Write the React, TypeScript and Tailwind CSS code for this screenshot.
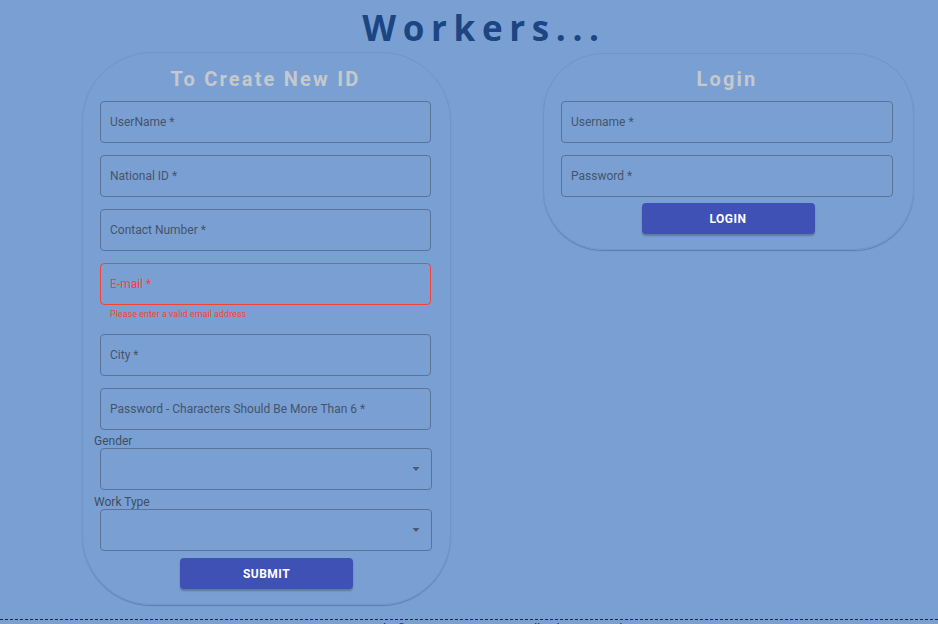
import React from "react";

const font = { fontFamily: "Roboto, 'Liberation Sans', sans-serif" };

function Field({ label, error }: { label: string; error?: boolean }) {
  return (
    <div
      className={
        "flex h-[42px] w-full items-center rounded-[4px] border px-[9px] " +
        (error ? "border-[#f44336]" : "border-[#5b7299]")
      }
    >
      <span className={"text-[12px] " + (error ? "text-[#f44336]" : "text-[#45546d]")}>
        {label}
      </span>
    </div>
  );
}

function Select() {
  return (
    <div className="flex h-[42px] w-[332px] items-center justify-end rounded-[4px] border border-[#5b7299] pr-[10px]">
      <svg width="10" height="6" viewBox="0 0 10 6">
        <path d="M1.5 1 L8.5 1 L5 5 Z" fill="#4a5972" />
      </svg>
    </div>
  );
}

export default function App() {
  return (
    <div className="min-h-[624px] w-full bg-[#7aa0d3] overflow-hidden" style={font}>
      <div className="flex h-[52px] items-center justify-center">
        <h1
          className="text-[35px] font-bold tracking-[0.19em] text-[#1b4583] leading-none mt-[2px] ml-[30px]"
          style={{ fontFamily: "'Open Sans', 'DejaVu Sans', sans-serif" }}
        >
          Workers...
        </h1>
      </div>
      <div className="flex items-start gap-[92px] pl-[82px]">
        <div className="flex w-[369px] flex-col rounded-[70px] border border-[#7095c7] pb-[15px] pl-[17px] pr-[19px] pt-[14px] shadow-[0_1px_1px_rgba(40,60,100,0.35)]">
          <h2 className="mb-[10px] text-center text-[20px] font-bold leading-[24px] tracking-[0.11em] text-[#c5c9ce]">
            To Create New ID
          </h2>
          <div className="flex flex-col gap-[12px]">
            <Field label="UserName *" />
            <Field label="National ID *" />
            <Field label="Contact Number *" />
            <Field label="E-mail *" error />
          </div>
          <div className="mt-[3px] mb-[14px] pl-[10px] text-[9px] leading-[12px] text-[#f44336]">
            Please enter a valid email address
          </div>
          <div className="flex flex-col gap-[12px]">
            <Field label="City *" />
            <Field label="Password - Characters Should Be More Than 6 *" />
          </div>
          <div className="mt-[4px] -ml-[6px] text-[12px] leading-[14px] text-[#3f4d63]">Gender</div>
          <Select />
          <div className="mt-[5px] -ml-[6px] text-[12px] leading-[14px] text-[#3f4d63]">Work Type</div>
          <Select />
          <div className="mt-[7px] flex justify-center pl-[2px]">
            <button className="h-[31px] w-[173px] rounded-[4px] bg-[#3f51b5] text-[12px] font-bold tracking-[0.04em] text-white shadow-[0_2px_2px_rgba(0,0,0,0.25)]">
              SUBMIT
            </button>
          </div>
        </div>
        <div className="mt-[1px] flex w-[371px] flex-col rounded-[60px] border border-[#7095c7] pb-[15px] pl-[17px] pr-[20px] pt-[13px] shadow-[0_1px_1px_rgba(40,60,100,0.35)]">
          <h2 className="mb-[10px] text-center text-[20px] font-bold leading-[24px] tracking-[0.11em] text-[#c5c9ce]">
            Login
          </h2>
          <div className="flex flex-col gap-[12px]">
            <Field label="Username *" />
            <Field label="Password *" />
          </div>
          <div className="mt-[6px] flex justify-center pl-[2px]">
            <button className="h-[31px] w-[173px] rounded-[4px] bg-[#3f51b5] text-[12px] font-bold tracking-[0.04em] text-white shadow-[0_2px_2px_rgba(0,0,0,0.25)]">
              LOGIN
            </button>
          </div>
        </div>
      </div>
      <footer className="mt-[14px] border-t border-dashed border-[#1a1a8c] text-center leading-none">
        <span className="ml-[30px] text-[12px] leading-none text-[#1a1a8c]">
          Copyright © 2021 Inc. Contact Us. All rights reserved.
        </span>
      </footer>
    </div>
  );
}
